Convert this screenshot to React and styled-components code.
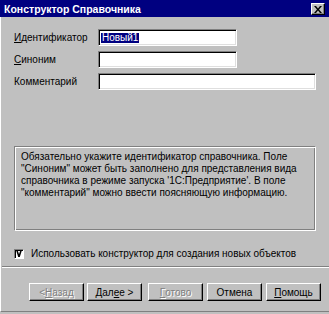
import React from 'react'
import styled, { createGlobalStyle } from 'styled-components'

const Global = createGlobalStyle`
    html, body {
        margin: 0;
        padding: 0;
        background: #c0c0c0;
    }
    body {
        font-family: "Liberation Sans", Arial, sans-serif;
        font-size: 10px;
        color: #000;
    }
`

function Button({ children, disabled, gap = 4 }) {
    return <Btn $disabled={disabled} $gap={gap}>{children}</Btn>
}

function App() {
    return (
        <Window>
            <Global />
            <TitleBar>
                <Title>Конструктор Справочника</Title>
                <CloseBtn>
                    <svg width="8" height="7" viewBox="0 0 8 7">
                        <path d="M0 0h2l2 2.5L6 0h2L5 3.5 8 7H6L4 4.5 2 7H0l3-3.5z" fill="#000" />
                    </svg>
                </CloseBtn>
            </TitleBar>
            <Body>
                <Form>
                    <Label><u>И</u>дентификатор</Label>
                    <Input $width={139}><Selected>Новый1</Selected></Input>
                    <Label><u>С</u>иноним</Label>
                    <Input $width={139} />
                    <Label>Комментарий</Label>
                    <Input $width={218} />
                </Form>
                <InfoBox>
                    Обязательно укажите идентификатор справочника. Поле<br />
                    "Синоним" может быть заполнено для представления вида<br />
                    справочника в режиме запуска '1С:Предприятие'. В поле<br />
                    "комментарий" можно ввести поясняющую информацию.
                </InfoBox>
                <CheckRow>
                    <CheckBox>
                        <svg width="6" height="7" viewBox="0 0 6 7">
                            <path d="M0 0h1.6L3 4.2 4.4 0H6L3.8 7H2.2z" fill="#000" />
                        </svg>
                    </CheckBox>
                    <span>Использовать конструктор для создания новых объектов</span>
                </CheckRow>
                <Separator />
                <ButtonBar>
                    <Button disabled gap={0}>&lt; <u>Н</u>азад</Button>
                    <Button gap={3}>Дал<u>е</u>е &gt;</Button>
                    <Button disabled gap={6}><u>Г</u>отово</Button>
                    <Button gap={4}>Отмена</Button>
                    <Button gap={4}><u>П</u>омощь</Button>
                </ButtonBar>
            </Body>
        </Window>
    )
}

export default App

const Window = styled.div`
    width: 329px;
    height: 314px;
    background: #c0c0c0;
    display: flex;
    flex-direction: column;
    box-sizing: border-box;
    overflow: hidden;
`

const TitleBar = styled.div`
    height: 17px;
    background: #000080;
    display: flex;
    align-items: center;
    justify-content: space-between;
    padding: 0 4px 0 4px;
    flex-shrink: 0;
`

const Title = styled.div`
    color: #fff;
    font-weight: bold;
    font-size: 10.5px;
`

const CloseBtn = styled.div`
    width: 14px;
    height: 12px;
    box-sizing: border-box;
    background: #c0c0c0;
    border: 1px solid;
    border-color: #fff #000 #000 #fff;
    box-shadow: inset -1px -1px 0 #808080;
    display: flex;
    align-items: center;
    justify-content: center;
    margin-top: 1px;
`

const Body = styled.div`
    flex: 1;
    border-left: 1px solid #fff;
    border-bottom: 1px solid #808080;
    margin-bottom: 2px;
    padding: 12px 0 0 13px;
    display: flex;
    flex-direction: column;
`

const Form = styled.div`
    display: grid;
    grid-template-columns: 84px auto;
    row-gap: 5px;
    align-items: center;
    justify-items: start;
`

const Label = styled.div`
    u { text-decoration: underline; }
`

const Input = styled.div`
    width: ${p => p.$width}px;
    height: 17px;
    box-sizing: border-box;
    background: #fff;
    border: 1px solid;
    border-color: #808080 #fff #fff #808080;
    box-shadow: inset 1px 1px 0 #000, inset -1px -1px 0 #dfdfdf;
    display: flex;
    align-items: center;
    padding-left: 2px;
`

const Selected = styled.span`
    background: #000080;
    color: #fff;
    line-height: 10px;
    padding: 0 1px;
`

const InfoBox = styled.div`
    margin-top: 56px;
    width: 302px;
    height: 85px;
    box-sizing: border-box;
    border: 1px solid;
    border-color: #808080 #fff #fff #808080;
    box-shadow: inset 1px 1px 0 #fff, inset -1px -1px 0 #808080;
    padding: 4px 6px;
    line-height: 12px;
    white-space: nowrap;
`

const CheckRow = styled.div`
    margin-top: 17px;
    display: flex;
    align-items: center;
    gap: 7px;
    height: 11px;
    line-height: 11px;
`

const CheckBox = styled.div`
    width: 10px;
    height: 10px;
    box-sizing: border-box;
    background: #fff;
    border: 1px solid;
    border-color: #808080 #fff #fff #808080;
    box-shadow: inset 1px 1px 0 #000;
    display: flex;
    align-items: center;
    justify-content: center;
`

const Separator = styled.div`
    margin: 7px 0 0 -12px;
    height: 0;
    border-top: 1px solid #808080;
    border-bottom: 1px solid #fff;
`

const ButtonBar = styled.div`
    margin-top: 15px;
    margin-left: 15px;
    display: flex;
`

const Btn = styled.div`
    width: 55px;
    height: 18px;
    margin-left: ${p => p.$gap}px;
    box-sizing: border-box;
    border: 1px solid;
    border-color: #fff #000 #000 #fff;
    box-shadow: inset -1px -1px 0 #808080;
    display: flex;
    align-items: center;
    justify-content: center;
    color: ${p => (p.$disabled ? '#808080' : '#000')};
    text-shadow: ${p => (p.$disabled ? '1px 1px 0 #fff' : 'none')};
`
